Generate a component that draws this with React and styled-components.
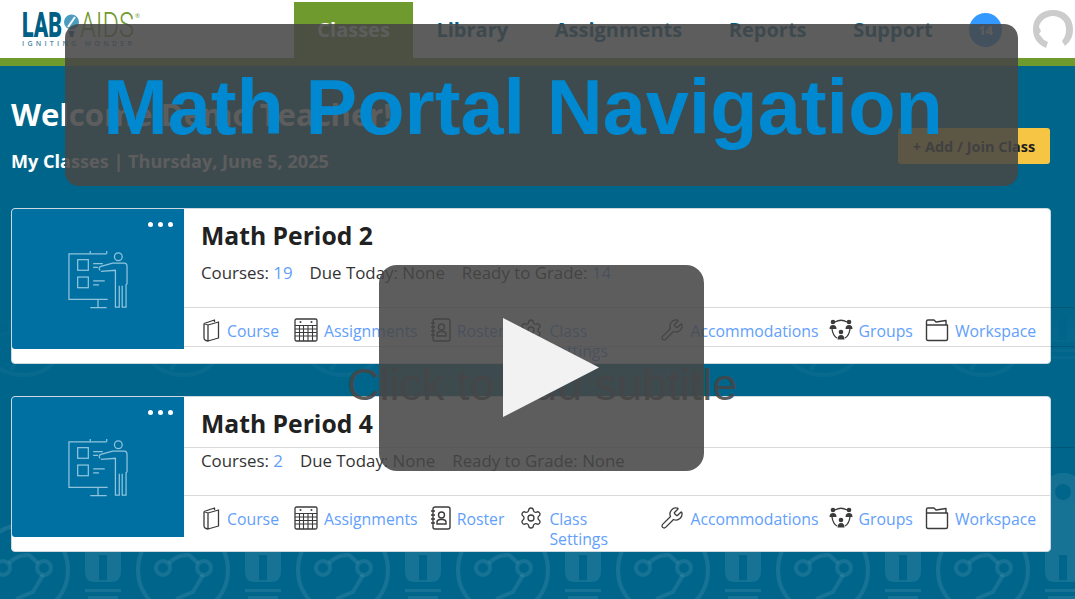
import React from "react";
import styled, { createGlobalStyle } from "styled-components";
import { Settings, Wrench } from "lucide-react";

const Global = createGlobalStyle`
  html, body { margin: 0; padding: 0; background: #00658a; }
  body { font-family: "Open Sans", "Liberation Sans", sans-serif; }
  * { box-sizing: border-box; }
`;

const Page = styled.div`
  position: relative;
  width: 1075px;
  height: 599px;
  overflow: hidden;
  background: #00658a;
`;
const PatternLayer = styled.svg`
  position: absolute;
  left: 0;
  top: 0;
  width: 1075px;
  height: 599px;
`;
const Header = styled.header`
  position: relative;
  display: flex;
  height: 58px;
  background: #fff;
`;
const Logo = styled.div`
  flex: none;
  width: 294px;
  padding: 13px 0 0 22px;
`;
const LogoMark = styled.div`
  display: flex;
  align-items: center;
  height: 26px;
  width: 125px;
`;
const LogoWord = styled.span`
  display: inline-block;
  flex: none;
  width: ${(p) => p.$w}px;
  font-family: Roboto, "Liberation Sans", sans-serif;
  font-size: 35px;
  line-height: 26px;
  font-weight: ${(p) => p.$weight};
  color: ${(p) => p.$color};
  transform: scaleX(${(p) => p.$sx});
  transform-origin: left center;
  white-space: nowrap;
`;
const Registered = styled.sup`
  font-size: 6px;
  line-height: 6px;
  align-self: flex-start;
  margin: 0;
  color: #6f9a2d;
`;
const Tagline = styled.div`
  margin-top: 1px;
  font-family: "Open Sans", sans-serif;
  font-size: 7px;
  line-height: 8px;
  font-weight: 600;
  letter-spacing: 3.25px;
  color: #4b88a8;
  white-space: nowrap;
`;
const Nav = styled.nav`
  display: flex;
  flex: none;
  padding-top: 2px;
`;
const Tab = styled.a`
  display: flex;
  align-items: center;
  padding: 0 23.3px 2px;
  font-size: 20px;
  font-weight: 700;
  color: ${(p) => (p.$active ? "#fff" : "#005f85")};
  background: ${(p) => (p.$active ? "#6f9a2d" : "transparent")};
`;
const Badge = styled.span`
  flex: none;
  width: 33px;
  height: 34px;
  margin: 13px 0 0 13px;
  border-radius: 50%;
  background: #3399ff;
  color: #fff;
  font-size: 13px;
  font-weight: 700;
  display: flex;
  align-items: center;
  justify-content: center;
`;
const Avatar = styled.svg`
  width: 44px;
  height: 44px;
  margin: 8px 0 0 29px;
  flex: none;
`;
const GreenBar = styled.div`
  position: relative;
  height: 8px;
  background: #6f9a2d;
`;
const Main = styled.main`
  position: relative;
  padding: 0 24px 0 11px;
`;
const Intro = styled.section`
  display: flex;
  justify-content: space-between;
  height: 142px;
`;
const Greeting = styled.h1`
  margin: 28px 0 0;
  font-size: 31px;
  line-height: 40px;
  font-weight: 700;
  color: #fff;
`;
const DateLine = styled.p`
  margin: 15px 0 0;
  font-size: 18.1px;
  line-height: 24px;
  font-weight: 700;
  color: #fff;
`;
const AddButton = styled.button`
  width: 152px;
  height: 36px;
  margin: 62px 1px 0 0;
  border: 0;
  border-radius: 3px;
  background: #f6c544;
  color: #1d1d1d;
  font: 700 14.5px "Open Sans", sans-serif;
  padding: 0;
`;
const CardList = styled.div`
  display: flex;
  flex-direction: column;
  gap: 32px;
`;
const Card = styled.article`
  display: grid;
  grid-template-columns: 172px 1fr;
  align-items: start;
  height: 156px;
  background: #fff;
  border: 1px solid #cdd8de;
  border-radius: 4px;
`;
const Panel = styled.div`
  position: relative;
  height: 140px;
  background: #0070a3;
  border-radius: 3px 0 0 3px;
  display: flex;
  align-items: center;
  justify-content: center;
`;
const Dots = styled.div`
  position: absolute;
  top: 13px;
  right: 11px;
  display: flex;
  gap: 5px;
  i { width: 5px; height: 5px; border-radius: 50%; background: #fff; display: block; }
`;
const Body = styled.div`
  min-width: 0;
`;
const CardTitle = styled.h2`
  margin: 0;
  height: 50px;
  padding: 10px 17px 0;
  font-size: 24.7px;
  line-height: 34px;
  font-weight: 700;
  color: #212121;
`;
const Rule = styled.div`
  height: 1px;
  width: ${(p) => (p.$bleed ? "calc(100% + 24px)" : "100%")};
  background: ${(p) => (p.$off ? "transparent" : "rgba(0, 0, 0, 0.15)")};
`;
const Stats = styled.div`
  display: flex;
  gap: 17px;
  height: 47px;
  padding: 2px 17px 0;
  font-size: 16.85px;
  line-height: 22px;
  color: #333;
`;
const Count = styled.span`
  color: #62a0fb;
`;
const LinkRow = styled.div`
  display: flex;
  height: 38px;
  padding: 10px 14px 0 18px;
`;
const LinkItem = styled.a`
  display: flex;
  align-items: flex-start;
  flex: none;
  gap: 6px;
  margin-right: ${(p) => p.$after}px;
  font-size: 15.8px;
  line-height: 20px;
  color: #62a0fb;
  svg { flex: none; color: #3b3b3b; }
`;
const LinkLabel = styled.span`
  padding-top: 3px;
  width: ${(p) => (p.$w ? `${p.$w}px` : "auto")};
`;
const TitleOverlay = styled.div`
  position: absolute;
  left: 65px;
  top: 24px;
  width: 953px;
  height: 162px;
  border-radius: 14px;
  background: rgba(70, 70, 70, 0.875);
  display: flex;
  align-items: center;
  justify-content: center;
  padding: 4px 37px 0 0;
  font-family: "Liberation Sans", Arial, sans-serif;
  font-weight: 700;
  font-size: 77.5px;
  color: #0089d0;
  white-space: nowrap;
`;
const PlayBox = styled.div`
  position: absolute;
  left: 379px;
  top: 265px;
  width: 325px;
  height: 206px;
  border-radius: 18px;
  background: rgba(70, 70, 70, 0.875);
`;
const Subtitle = styled.div`
  position: absolute;
  left: 347px;
  top: 360px;
  font-family: "Liberation Sans", Arial, sans-serif;
  font-size: 45px;
  line-height: 50px;
  color: rgba(70, 70, 70, 0.9);
  white-space: nowrap;
`;
const PlayIcon = styled.svg`
  position: absolute;
  left: 503px;
  top: 318px;
  width: 96px;
  height: 99px;
`;

const BookIcon = () => (
  <svg width="19" height="24" viewBox="0 0 19 24" fill="none" stroke="currentColor" strokeWidth="1.3" strokeLinejoin="round">
    <path d="M2 5.5 L12.5 2 V4 M2 5.5 V20 Q2 22 4 22.5 L6 23 V7 L2 5.5 M6 7 L16.5 4 V20 L6 23" />
  </svg>
);
const CalendarIcon = () => (
  <svg width="24" height="24" viewBox="0 0 24 24" fill="none" stroke="currentColor">
    <rect x="1" y="1" width="22" height="22" rx="1.5" strokeWidth="1.3" />
    <circle cx="6.5" cy="4" r="1" fill="currentColor" stroke="none" />
    <circle cx="17.5" cy="4" r="1" fill="currentColor" stroke="none" />
    <path d="M1 7.5 H23 M1 11 H23 M1 14.5 H23 M1 18 H23 M5.5 7.5 V23 M9.5 7.5 V23 M14 7.5 V23 M18.5 7.5 V23" strokeWidth="1.1" />
  </svg>
);
const RosterIcon = () => (
  <svg width="21" height="24" viewBox="0 0 21 24" fill="none" stroke="currentColor" strokeWidth="1.4">
    <rect x="3" y="1" width="17" height="22" rx="2" />
    <path d="M1 5 H5 M1 9 H5 M1 13 H5 M1 17 H5" />
    <circle cx="11.5" cy="9" r="3" />
    <path d="M7 18 V16 Q7 14 10 13.5 H13 Q16 14 16 16 V18 Z" />
  </svg>
);
const GroupsIcon = () => (
  <svg width="24" height="24" viewBox="0 0 24 24" fill="none" stroke="currentColor">
    <path d="M6 4 Q12 0.5 18 4 M3 11 Q4 18 8 20 M21 11 Q20 18 16 20" strokeWidth="1.3" />
    <g fill="currentColor" stroke="none">
      <circle cx="4" cy="4" r="2.3" /><path d="M0.5 11 Q0.5 7 4 7 Q7.5 7 7.5 11 Z" />
      <circle cx="20" cy="4" r="2.3" /><path d="M16.5 11 Q16.5 7 20 7 Q23.5 7 23.5 11 Z" />
      <circle cx="12" cy="14" r="2.3" /><path d="M8.5 21.5 Q8.5 17 12 17 Q15.5 17 15.5 21.5 Z" />
    </g>
  </svg>
);
const FolderIcon = () => (
  <svg width="24" height="24" viewBox="0 0 24 24" fill="none" stroke="currentColor" strokeWidth="1.4" strokeLinejoin="round">
    <path d="M1.5 3.5 Q1.5 2 3 2 H9 L11 4 L21 2.5 V7 M1.5 7 H22.5 V21 Q22.5 22.5 21 22.5 H3 Q1.5 22.5 1.5 21 Z M1.5 7 V3.5" />
  </svg>
);

const TeacherIcon = () => (
  <svg width="60" height="60" viewBox="0 0 62 62" fill="none" stroke="#8fc3dc" strokeWidth="1.3">
    <path d="M40 5 H1 V52 H41" />
    <path d="M23 2 V5 M40 2 V5 M31 52 V60 M23 60.5 H40" />
    <rect x="10" y="11" width="11" height="11" />
    <rect x="10" y="29" width="11" height="11" />
    <path d="M26 15 H36 M26 19 H31 M26 33 H38 M26 37 H32" />
    <circle cx="52" cy="8" r="4" />
    <path d="M33 22 Q31 19 34 18 L46 14.5 H58 Q61 14.5 61 18 V36 L60 37 V60 H56 V38 M53 38 V60 H49 V22 L34 23" />
  </svg>
);

const LINKS = [
  { icon: <BookIcon />, label: "Course", after: 15 },
  { icon: <CalendarIcon />, label: "Assignments", after: 12 },
  { icon: <RosterIcon />, label: "Roster", after: 15 },
  { icon: <Settings size={24} strokeWidth={1.3} />, label: "Class Settings", width: 99, after: 12 },
  { icon: <Wrench size={24} strokeWidth={1.3} />, label: "Accommodations", after: 10 },
  { icon: <GroupsIcon />, label: "Groups", after: 12 },
  { icon: <FolderIcon />, label: "Workspace", after: 0 },
];

const CLASSES = [
  { name: "Math Period 2", courses: 19, ready: 14, titleRule: false, midBleed: true, endRule: true },
  { name: "Math Period 4", courses: 2, ready: "None", titleRule: true, midBleed: false, endRule: false },
];

const ClassCard = ({ c }) => (
  <Card>
    <Panel>
      <Dots><i /><i /><i /></Dots>
      <TeacherIcon />
    </Panel>
    <Body>
      <CardTitle>{c.name}</CardTitle>
      <Rule $off={!c.titleRule} $bleed />
      <Stats>
        <span>Courses: <Count>{c.courses}</Count></span>
        <span>Due Today: None</span>
        <span>Ready to Grade: {typeof c.ready === "number" ? <Count>{c.ready}</Count> : c.ready}</span>
      </Stats>
      <Rule $bleed={c.midBleed} />
      <LinkRow>
        {LINKS.map((l) => (
          <LinkItem key={l.label} $after={l.after}>
            {l.icon}
            <LinkLabel $w={l.width}>{l.label}</LinkLabel>
          </LinkItem>
        ))}
      </LinkRow>
      <Rule $off={!c.endRule} $bleed />
    </Body>
  </Card>
);

const Pattern = () => (
  <PatternLayer viewBox="0 0 1075 599">
    <defs>
      <pattern id="tile" x="-37" y="-10" width="160" height="240" patternUnits="userSpaceOnUse">
        <g fill="none" stroke="#fff" strokeOpacity="0.09" strokeWidth="4">
          <circle cx="60" cy="100" r="45" />
          <circle cx="40" cy="98" r="7" />
          <circle cx="81" cy="98" r="7" />
          <path d="M46 93 Q55 84 66 85 L75 93 M80 105 L70 122 L55 128 L48 140" />
        </g>
        <g fill="#fff" fillOpacity="0.09">
          <path fillRule="evenodd" d="M122 22 Q122 3 140 3 Q158 3 158 22 V102 Q158 112 148 112 H132 Q122 112 122 102 Z M136 85 V110 H144 V85 Z M140 14 A8 8 0 1 0 140 30 A8 8 0 1 0 140 14 Z" />
          <rect x="122" y="119" width="36" height="3" />
          <rect x="125" y="126" width="30" height="3" />
        </g>
      </pattern>
      <linearGradient id="fade" x1="0" y1="0" x2="0" y2="1">
        <stop offset="0.5" stopColor="#00658a" stopOpacity="1" />
        <stop offset="0.85" stopColor="#00658a" stopOpacity="0" />
      </linearGradient>
    </defs>
    <rect width="1075" height="599" fill="url(#tile)" />
    <rect width="1075" height="599" fill="url(#fade)" />
  </PatternLayer>
);

export default function App() {
  return (
    <Page>
      <Global />
      <Pattern />
      <Header>
        <Logo>
          <LogoMark>
            <LogoWord $w={41} $sx={0.61} $weight={900} $color="#005f85">LAB</LogoWord>
            <svg width="17" height="24" viewBox="0 0 17 24">
              <circle cx="8.5" cy="8" r="7.5" fill="#4b9cc0" />
              <path d="M5 13 L12 3" stroke="#fff" strokeWidth="2" />
              <path d="M5.5 17 H11.5 L10 23 H7 Z" fill="#005f85" />
            </svg>
            <LogoWord $w={55} $sx={0.72} $weight={300} $color="#6f9a2d">AIDS</LogoWord>
            <Registered>®</Registered>
          </LogoMark>
          <Tagline>IGNITING WONDER</Tagline>
        </Logo>
        <Nav>
          <Tab $active>Classes</Tab>
          <Tab>Library</Tab>
          <Tab>Assignments</Tab>
          <Tab>Reports</Tab>
          <Tab>Support</Tab>
        </Nav>
        <Badge>14</Badge>
        <Avatar viewBox="0 0 44 44" fill="none">
          <path d="M15 40 C5 36 2 28 2 21 C2 9 11 2 22 2 C33 2 42 9 42 21 C42 28 40 33 34 38 L31 33 C34 29 35 26 35 21 C35 13 29 8 22 8 C15 8 9 13 8 19 L10 23 L8 26 L13 32 L17 34 Z" fill="#cccccc" />
        </Avatar>
      </Header>
      <GreenBar />
      <Main>
        <Intro>
          <div>
            <Greeting>Welcome Demo Teacher!</Greeting>
            <DateLine>My Classes | Thursday, June 5, 2025</DateLine>
          </div>
          <AddButton>+ Add / Join Class</AddButton>
        </Intro>
        <CardList>
          {CLASSES.map((c) => <ClassCard key={c.name} c={c} />)}
        </CardList>
      </Main>
      <TitleOverlay>Math Portal Navigation</TitleOverlay>
      <PlayBox />
      <Subtitle>Click to add subtitle</Subtitle>
      <PlayIcon viewBox="0 0 96 99"><path d="M0 0 L96 49.5 L0 99 Z" fill="#f2f2f2" /></PlayIcon>
    </Page>
  );
}
